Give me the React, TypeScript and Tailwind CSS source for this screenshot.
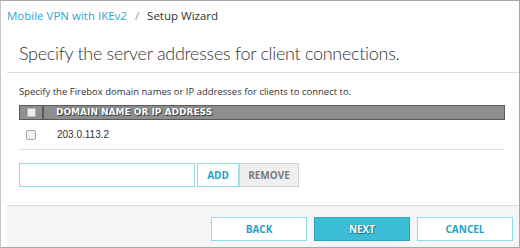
import React from "react";

export default function App() {
  return (
    <div className="w-[520px] h-[248px] bg-white overflow-hidden">
      <div className="w-[520px] h-[248px] border-t border-r border-b border-l border-t-[#a8a8a8] border-r-[#a8a8a8] border-b-[#a8a8a8] border-l-[#c8c8c8] flex flex-col pl-[6px]">
        {/* breadcrumb */}
        <div className="h-[29px] shrink-0 flex items-center text-[11.5px] font-['Open_Sans',sans-serif]">
          <span className="text-[#29a8d6]">Mobile VPN with IKEv2</span>
          <span className="text-[#999] mx-[8px]">/</span>
          <span className="text-[#333]">Setup Wizard</span>
        </div>
        {/* heading */}
        <div className="h-[43px] shrink-0 flex items-center pl-[12px] border-b border-[#dcdcdc]">
          <h1 className="text-[18px] tracking-[-0.3px] font-light text-[#333] font-['Lato',sans-serif] leading-none pt-[3px]">
            Specify the server addresses for client connections.
          </h1>
        </div>
        {/* body */}
        <div className="flex-1 flex flex-col pl-[12px] pr-[12px]">
          <p className="text-[9.5px] text-[#333] font-['Open_Sans',sans-serif] mt-[14px] leading-[10px]">
            Specify the Firebox domain names or IP addresses for clients to connect to.
          </p>
          <div className="mt-[8px] w-[486px]">
            <div className="h-[15px] flex bg-[#8e8e8e] border border-[#5a5a5a]">
              <div className="w-[24px] flex items-center justify-center border-r-2 border-[#5a5a5a]">
                <div className="w-[9px] h-[9px] bg-[#ececec] border border-[#b8b8b8] rounded-[1px]" />
              </div>
              <div className="flex items-center pl-[12px] text-[9px] font-bold text-white font-['DejaVu_Sans',sans-serif] [text-shadow:0_0_1px_#333,1px_1px_0_#444]">
                DOMAIN NAME OR IP ADDRESS
              </div>
            </div>
            <div className="h-[30px] flex items-center border-b border-[#dedede]">
              <div className="w-[24px] flex items-center justify-center">
                <div className="w-[10px] h-[10px] bg-[#f2f2f2] border border-[#a8a8a8] rounded-[2px]" />
              </div>
              <div className="pl-[14px] text-[10px] text-[#333] font-['Liberation_Sans',sans-serif]">
                203.0.113.2
              </div>
            </div>
          </div>
          <div className="mt-[13px] flex items-center">
            <div className="w-[176px] h-[24px] border border-[#93dbe9] bg-white" />
            <button className="ml-[2px] w-[42px] h-[24px] border border-[#93dbe9] bg-white text-[#1ea1c9] text-[10px] font-bold font-['Open_Sans',sans-serif]">
              ADD
            </button>
            <button className="w-[60px] h-[24px] border border-[#d4d4d4] bg-[#efefef] text-[#7a7a7a] text-[10px] font-bold font-['Open_Sans',sans-serif]">
              REMOVE
            </button>
          </div>
        </div>
        {/* footer */}
        <div className="h-[42px] shrink-0 bg-[#f4f5f5] border-t border-[#d9d9d9] flex items-start justify-end gap-[7px] pr-[6px] pt-[11px]">
          <button className="w-[96px] h-[24px] border border-[#93dbe9] bg-white text-[#1ea1c9] text-[10px] font-bold font-['Open_Sans',sans-serif]">
            BACK
          </button>
          <button className="w-[96px] h-[24px] border border-[#2aa6c2] bg-[#3cbdd6] text-white text-[10px] font-bold font-['Open_Sans',sans-serif] [text-shadow:0_0_1px_#1a6f85,1px_1px_0_#1a6f85]">
            NEXT
          </button>
          <button className="w-[96px] h-[24px] border border-[#93dbe9] bg-white text-[#1ea1c9] text-[10px] font-bold font-['Open_Sans',sans-serif]">
            CANCEL
          </button>
        </div>
      </div>
    </div>
  );
}
